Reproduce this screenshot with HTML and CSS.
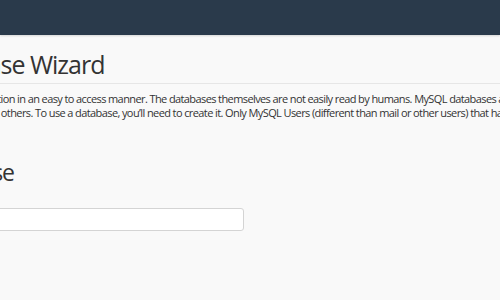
FILE: index.html
```html
<!DOCTYPE html>
<html lang="en">
<head>
<meta charset="utf-8">
<title>MySQL® Database Wizard</title>
<link rel="stylesheet" href="styles.css">
</head>
<body>
<header class="topbar"></header>
<main class="page">
  <div class="title-row">
    <span class="app-icon"></span>
    <h1 class="page-title">MySQL® Database Wizard</h1>
  </div>
  <p class="intro">MySQL databases allow you to store lots of information in an easy to access manner. The databases themselves are not easily read by humans. MySQL databases are required by many web applications, including some<br>bulletin boards, content management systems, and others. To use a database, you’ll need to create it. Only MySQL Users (different than mail or other users) that have privileges to access a database can read from or write to that database.</p>
  <h2 class="step-title">Step 1: Create A Database</h2>
  <div class="field">
    <label class="field-label" for="db">New Database:</label>
    <div class="input-group">
      <span class="input-prefix">user_</span>
      <input class="text-input" id="db" type="text">
    </div>
  </div>
</main>
</body>
</html>
```
FILE: styles.css
```css
html, body { overflow: hidden; }
body {
  margin: 0;
  background: #f9f9f9;
  color: #333;
  font-family: "Open Sans", sans-serif;
}
.topbar {
  height: 35px;
  background: #2a3a4b;
  box-shadow: 0 1px 2px rgba(0, 0, 0, 0.15);
}
.page {
  margin-left: -236px;
  width: 1100px;
}
.title-row {
  display: flex;
  align-items: center;
  gap: 9px;
  padding-top: 12px;
  padding-bottom: 2px;
  border-bottom: 1px solid #e6e6e6;
}
.app-icon {
  width: 48px;
  height: 34px;
  flex: none;
}
.page-title {
  margin: 0;
  font-size: 25px;
  font-weight: 400;
  letter-spacing: -1px;
  line-height: 34px;
  color: #333;
}
.intro {
  margin: 8px 0 0;
  font-size: 11px;
  line-height: 14px;
  letter-spacing: -0.6px;
  white-space: nowrap;
}
.step-title {
  margin: 38px 0 0;
  font-size: 23px;
  font-weight: 400;
  line-height: 29px;
  letter-spacing: -1.1px;
}
.field {
  margin-top: 5px;
  display: flex;
  flex-direction: column;
  gap: 2px;
  width: 480px;
}
.field-label {
  font-size: 11px;
  line-height: 14px;
  font-weight: 600;
}
.input-group {
  display: flex;
  height: 23px;
}
.input-prefix {
  display: flex;
  align-items: center;
  padding: 0 8px;
  font-size: 11px;
  background: #eee;
  border: 1px solid #d4d4d4;
  border-right: 0;
  border-radius: 3px 0 0 3px;
}
.text-input {
  flex: 1;
  margin: 0;
  padding: 0 8px;
  border: 1px solid #d4d4d4;
  border-radius: 0 3px 3px 0;
  background: #fff;
  font: 11px "Open Sans", sans-serif;
}
```
